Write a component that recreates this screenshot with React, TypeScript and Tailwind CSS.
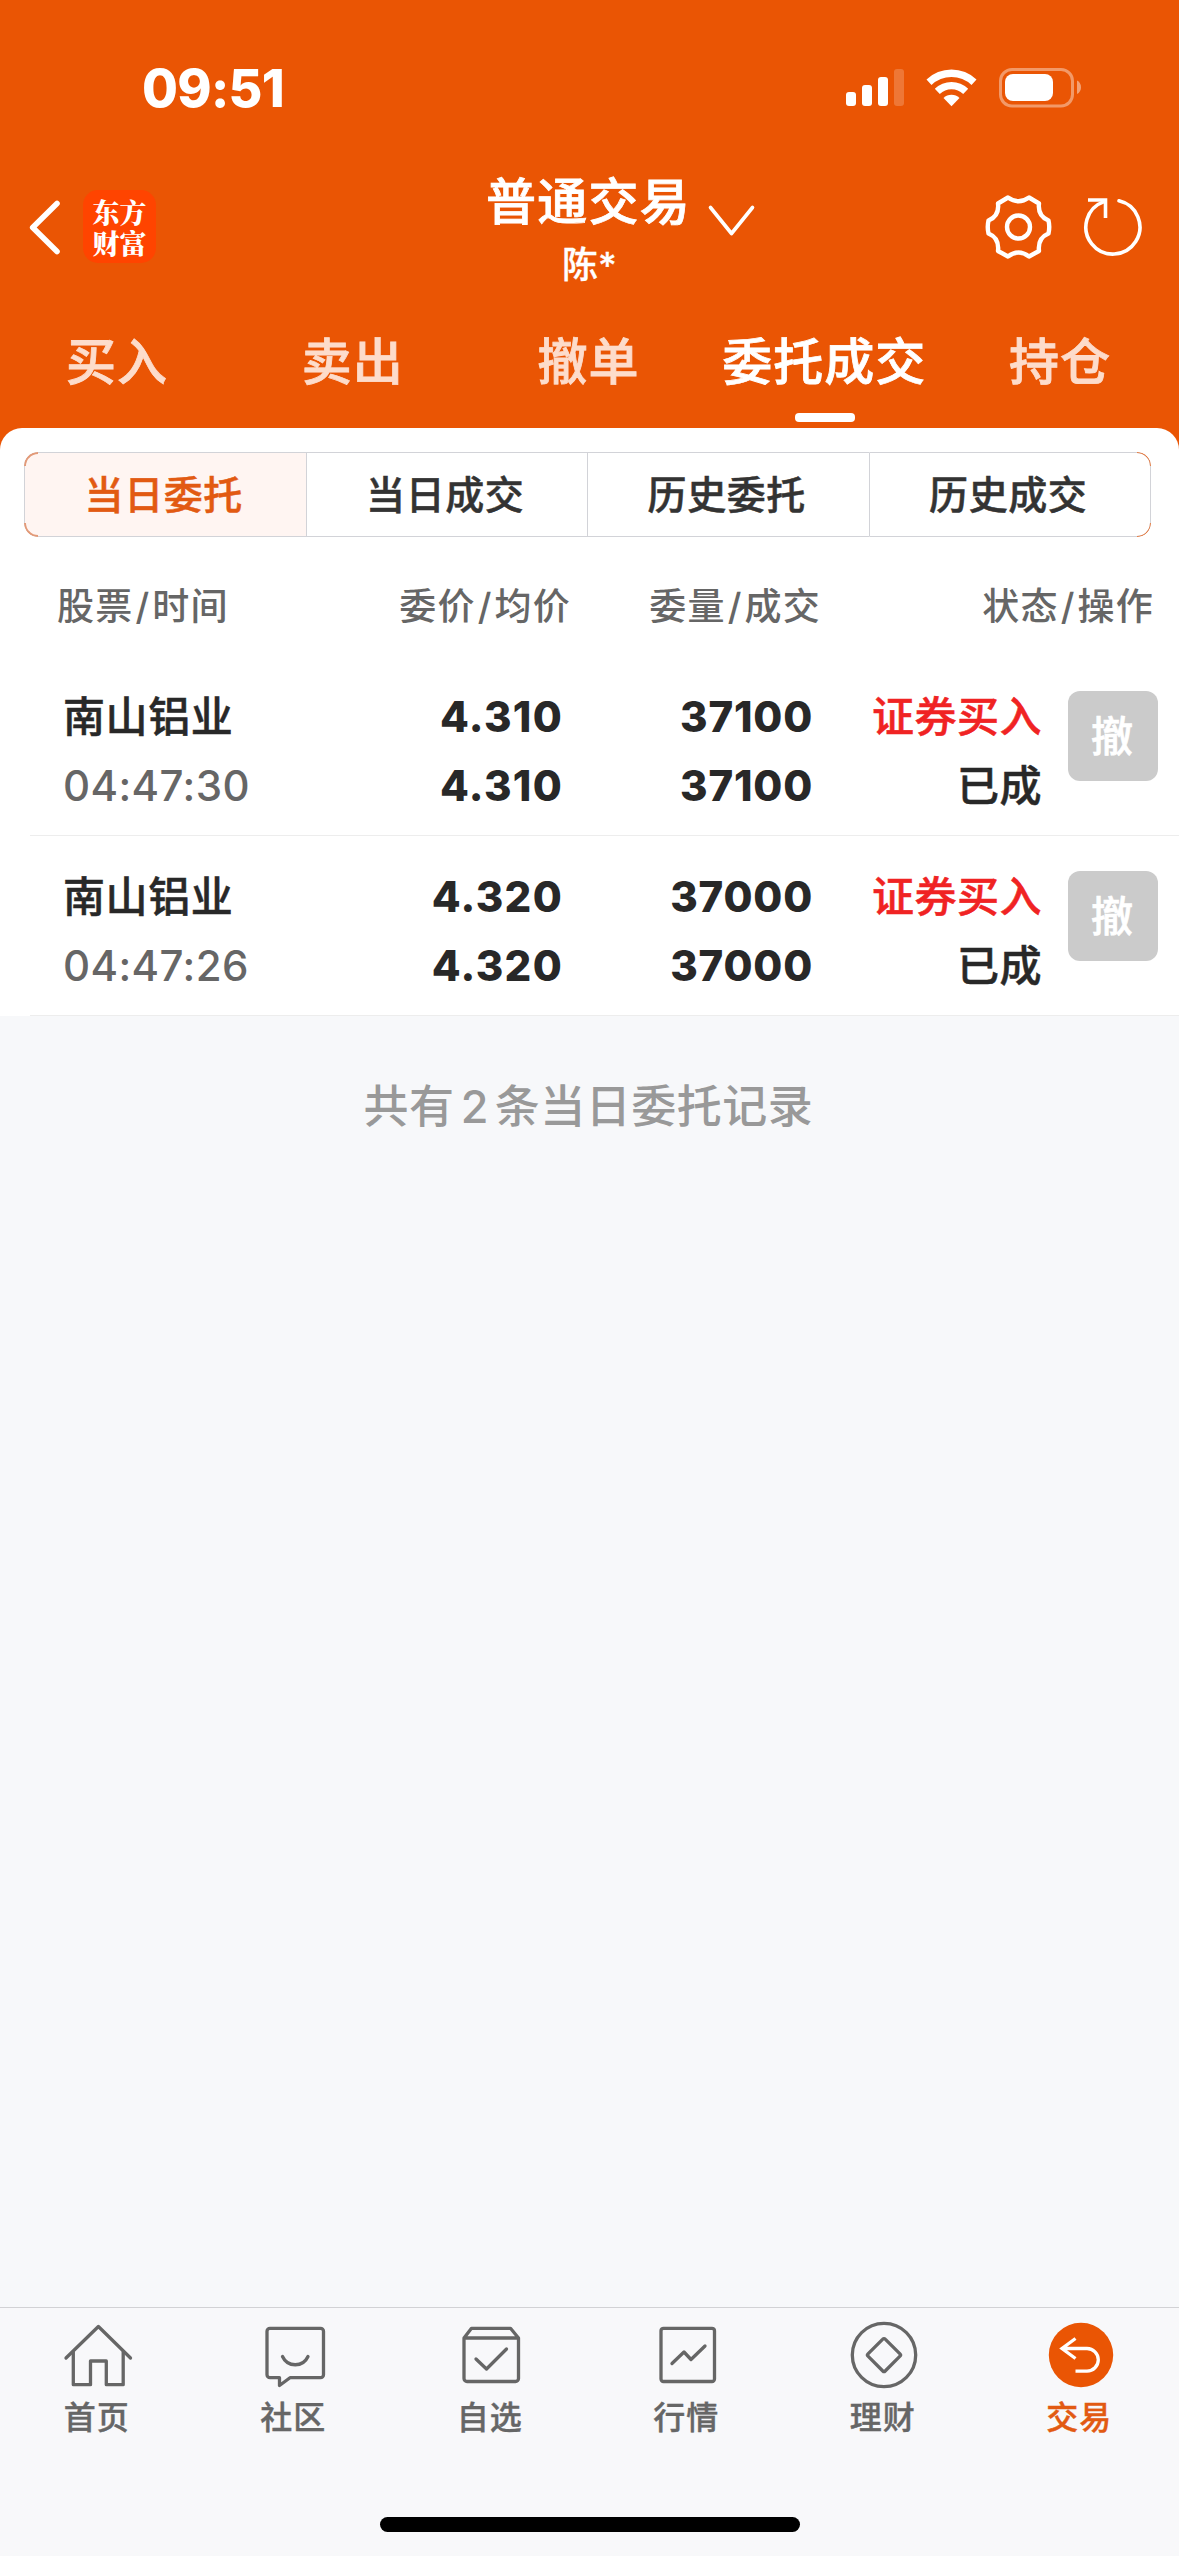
import React from "react";

const tabs = ["买入", "卖出", "撤单", "委托成交", "持仓"];
const segments = ["当日委托", "当日成交", "历史委托", "历史成交"];
const orders = [
  { name: "南山铝业", time: "04:47:30", price: "4.310", avg: "4.310", qty: "37100", done: "37100" },
  { name: "南山铝业", time: "04:47:26", price: "4.320", avg: "4.320", qty: "37000", done: "37000" },
];

function StatusBar() {
  return (
    <div className="flex h-[176px] justify-between pr-[96px] pl-[142px]">
      <div className="mt-[59px] h-[60px] text-[52px] leading-[60px] font-extrabold tracking-[-0.7px]">09:51</div>
      <svg className="mt-[64px] h-[46px] w-[237px]" viewBox="846 64 237 46" fill="#fff">
        <rect x="846" y="92" width="10" height="14" rx="3" />
        <rect x="862" y="85" width="10" height="21" rx="3" />
        <rect x="878" y="77" width="10" height="29" rx="3" />
        <rect x="894" y="69" width="10" height="37" rx="3" opacity="0.2" />
        <path d="M926.5 79.5a36 36 0 0 1 50 0l-5 5.4a29 29 0 0 0-40 0z" />
        <path d="M934.8 88.7a24 24 0 0 1 33.4 0l-5 5.3a17 17 0 0 0-23.4 0z" />
        <path d="M943.5 98a11.500 11.500 0 0 1 16 0L951.5 106.3z" />
        <rect x="1000.5" y="69.5" width="72" height="36.5" rx="11.5" fill="none" stroke="#fff" strokeOpacity="0.4" strokeWidth="3" />
        <rect x="1005" y="74" width="48" height="27" rx="8" />
        <path d="M1077 80.5c2.5 1 4 3.800 4 6.700s-1.500 5.700-4 6.700z" opacity="0.45" />
      </svg>
    </div>
  );
}

function TitleBar() {
  return (
    <div className="grid h-[130px] grid-cols-[1fr_auto_1fr]">
      <div className="flex pl-[28px]">
        <svg className="mt-[22px] h-[60px] w-[36px]" viewBox="28 198 36 60" fill="none" stroke="#fff" strokeWidth="5.6" strokeLinecap="round" strokeLinejoin="round">
          <path d="M57 203.500 32.700 227.500 57 251.500" />
        </svg>
        <div className="mt-[14px] ml-[19px] flex h-[73px] w-[73px] items-center justify-center rounded-[15px] bg-[#ff4400]">
          <span className="w-[56px] text-center font-['Noto_Serif_CJK_SC','Noto_Sans_CJK_SC',serif] text-[27px] leading-[31px] font-black break-all">
            东方财富
          </span>
        </div>
      </div>
      <div className="flex flex-col items-center">
        <div className="relative flex h-[52px] items-center">
          <span className="-ml-[2px] text-[50px] leading-[52px] font-medium tracking-[1.300px] [-webkit-text-stroke:0.8px]">普通交易</span>
          <svg className="absolute top-[26px] left-[219px] h-[36px] w-[50px]" viewBox="707 202 50 36" fill="none" stroke="#fff" strokeWidth="3.6" strokeLinecap="round" strokeLinejoin="round">
            <path d="M710.500 207.500 731.500 233.500 752.500 207.500" />
          </svg>
        </div>
        <div className="mt-[17px] h-[40px] text-[36px] leading-[40px] font-medium [-webkit-text-stroke:0.3px]">陈*</div>
      </div>
      <div className="flex justify-end pr-[34px]">
        <svg className="mt-[14px] h-[74px] w-[165px]" viewBox="980 190 165 74" fill="none" stroke="#fff" strokeLinejoin="round" strokeLinecap="round">
          <path strokeWidth="4.4" d="M1008 197.500 Q1018.500 205 1029 197.500 L1039 203.500 Q1037.500 216 1048.500 220.500 Q1050 227 1048.500 233.500 Q1037.500 238 1039 251 L1029 256.500 Q1018.500 248.500 1008 256.500 L998 251 Q999.500 238 988.500 233.500 Q987 227 988.500 220.500 Q999.500 216 998 203.500 Z" />
          <circle strokeWidth="4.4" cx="1018.5" cy="227" r="11.500" />
          <path strokeWidth="3.6" d="M1119 200.800a27 27 0 1 1-15 0.800" />
          <path strokeWidth="3.6" strokeLinecap="butt" strokeLinejoin="miter" d="M1088 200H1105.500V218" />
        </svg>
      </div>
    </div>
  );
}

function Tabs() {
  return (
    <div className="flex h-[122px]">
      {tabs.map((t) => {
        const active = t === "委托成交";
        return (
          <div key={t} className="flex flex-1 basis-0 flex-col items-center">
            <span
              className={`mt-[26px] -ml-[2px] text-[50px] leading-[60px] font-medium tracking-[1px] whitespace-nowrap [-webkit-text-stroke:0.8px] ${
                active ? "text-white" : "text-[#fddccb]"
              }`}
            >
              {t}
            </span>
            {active && <span className="mt-[21px] h-[9px] w-[60px] rounded-[4px] bg-white" />}
          </div>
        );
      })}
    </div>
  );
}

function Segments() {
  return (
    <div className="relative mx-[24px] flex h-[85px] w-[1127px] overflow-hidden rounded-[14px]">
      {segments.map((s, i) => (
        <div
          key={s}
          className={`flex flex-1 basis-0 items-center justify-center border-y border-l border-[#d2d3d8] pr-[3px] text-[39px] leading-[50px] font-medium tracking-[0.6px] [-webkit-text-stroke:0.5px] ${
            i === 0 ? "rounded-l-[14px] bg-[#fff5f2] text-[#e25a12]" : "bg-white text-[#333]"
          } ${i === 3 ? "rounded-r-[14px] border-r" : ""}`}
        >
          {s}
        </div>
      ))}
      <span className="absolute top-0 left-0 size-[14px] rounded-tl-[14px] border-t-2 border-l-2 border-[#e39a78]" />
      <span className="absolute bottom-0 left-0 size-[14px] rounded-bl-[14px] border-b-2 border-l-2 border-[#e39a78]" />
      <span className="absolute top-0 right-0 size-[14px] rounded-tr-[14px] border-t border-r border-[#e5793f]" />
      <span className="absolute right-0 bottom-0 size-[14px] rounded-br-[14px] border-r border-b border-[#e5793f]" />
    </div>
  );
}

function Orders() {
  return (
    <div>
      <div className="flex h-[119px] pt-[46px] text-[37px] leading-[48px] font-medium tracking-[1.2px] text-[#666]">
        <div className="w-[290px] pl-[57px]">股票<Slash />时间</div>
        <div className="w-[281px] text-right">委价<Slash />均价</div>
        <div className="w-[250px] text-right">委量<Slash />成交</div>
        <div className="w-[333px] text-right">状态<Slash />操作</div>
      </div>
      {orders.map((o) => (
        <div key={o.time} className="ml-[30px] flex h-[180px] border-b border-[#ededed] pt-[26px] text-[42px] leading-[69px] text-[#282828]">
          <div className="w-[260px] pl-[33px]">
            <div className="font-medium tracking-[0.6px] [-webkit-text-stroke:0.5px]">{o.name}</div>
            <div className="font-medium tracking-[0.4px] text-[#666]">{o.time}</div>
          </div>
          <div className="w-[273px] text-right font-extrabold tracking-[1.3px]">
            <div>{o.price}</div>
            <div>{o.avg}</div>
          </div>
          <div className="w-[250px] text-right font-extrabold tracking-[0.8px]">
            <div>{o.qty}</div>
            <div>{o.done}</div>
          </div>
          <div className="w-[229px] text-right font-medium tracking-[0.5px] [-webkit-text-stroke:0.5px]">
            <div className="text-[#f02323]">证券买入</div>
            <div>已成</div>
          </div>
          <div className="mt-[9px] ml-[26px] flex h-[90px] w-[90px] items-center justify-center rounded-[12px] bg-[#cbcbcb] pr-[2px] font-medium text-white [-webkit-text-stroke:0.7px]">
            撤
          </div>
        </div>
      ))}
    </div>
  );
}

function Slash() {
  return <span className="mx-[2px]">/</span>;
}

const navItems: { label: string; icon: React.ReactNode }[] = [
  {
    label: "首页",
    icon: (
      <>
        <path d="M3 38 35.400 6.500 67.500 38" />
        <path d="M10.300 32V64.700H27.500V41H43.300V64.700H60.200V32" />
      </>
    ),
  },
  {
    label: "社区",
    icon: (
      <>
        <path d="M10 8.300H60.500a3 3 0 0 1 3 3V54.700a3 3 0 0 1-3 3H30L19.500 65.500V57.700H10a3 3 0 0 1-3-3V11.300a3 3 0 0 1 3-3Z" />
        <path d="M22.500 36.500c5 11 20.500 11 25.500 0" />
      </>
    ),
  },
  {
    label: "自选",
    icon: (
      <>
        <path d="M8 18 15.500 8.300H54.500L62.500 18V58.500a3 3 0 0 1-3 3H11a3 3 0 0 1-3-3ZM8 18H62.500" />
        <path d="M20 39 30.500 49 50.500 29" />
      </>
    ),
  },
  {
    label: "行情",
    icon: (
      <>
        <rect x="8" y="8.300" width="53.500" height="53.200" rx="2.500" />
        <path d="M19 43.500 31 32 38 39.500 52 26" />
      </>
    ),
  },
  {
    label: "理财",
    icon: (
      <>
        <circle cx="35" cy="35" r="31.700" />
        <path d="M33.800 19.200q1.200-1.300 2.400 0L51 33.800q1.200 1.200 0 2.400L36.200 51q-1.200 1.200-2.400 0L19 36.200q-1.200-1.200 0-2.400Z" />
      </>
    ),
  },
  {
    label: "交易",
    icon: (
      <>
        <circle cx="35" cy="35" r="32.200" fill="#ea5504" stroke="none" />
        <path stroke="#fff" strokeLinecap="butt" strokeLinejoin="miter" d="M29.500 18.500 16 28.500 29.500 38.500M16 28.500H41a11.300 11.300 0 0 1 0 22.600H29.500" />
      </>
    ),
  },
];

export default function App() {
  return (
    <div className="flex h-[2556px] w-[1179px] flex-col overflow-hidden bg-[#f7f8fa] font-['Inter','Noto_Sans_CJK_SC',sans-serif]">
      <div className="bg-[#ea5504]">
        <header className="text-white">
          <StatusBar />
          <TitleBar />
          <Tabs />
        </header>
        <main className="rounded-t-[22px] bg-white pt-[24px]">
          <Segments />
          <Orders />
        </main>
      </div>
      <p className="mt-[60px] -ml-[2px] text-center text-[45px] leading-[62px] font-medium tracking-[0.5px] text-[#999]">
        共有<span className="mx-[6px]">2</span>条当日委托记录
      </p>
      <nav className="mt-auto flex h-[249px] flex-col items-center border-t border-[#d2d2d5] bg-[#f8f8fa]">
        <div className="flex w-full">
          {navItems.map((n) => (
            <div key={n.label} className="flex flex-1 basis-0 flex-col items-center pt-[12px]">
              <svg className="h-[70px] w-[70px]" viewBox="0 0 70 70" fill="none" stroke="#666" strokeWidth="3.3" strokeLinecap="round" strokeLinejoin="round">
                {n.icon}
              </svg>
              <span
                className={`mt-[8px] -ml-[3px] text-[32px] leading-[40px] font-medium tracking-[1px] [-webkit-text-stroke:0.4px] ${
                  n.label === "交易" ? "text-[#e25a12]" : "text-[#666]"
                }`}
              >
                {n.label}
              </span>
            </div>
          ))}
        </div>
        <div className="mt-[79px] h-[15px] w-[420px] rounded-full bg-black" />
      </nav>
    </div>
  );
}
